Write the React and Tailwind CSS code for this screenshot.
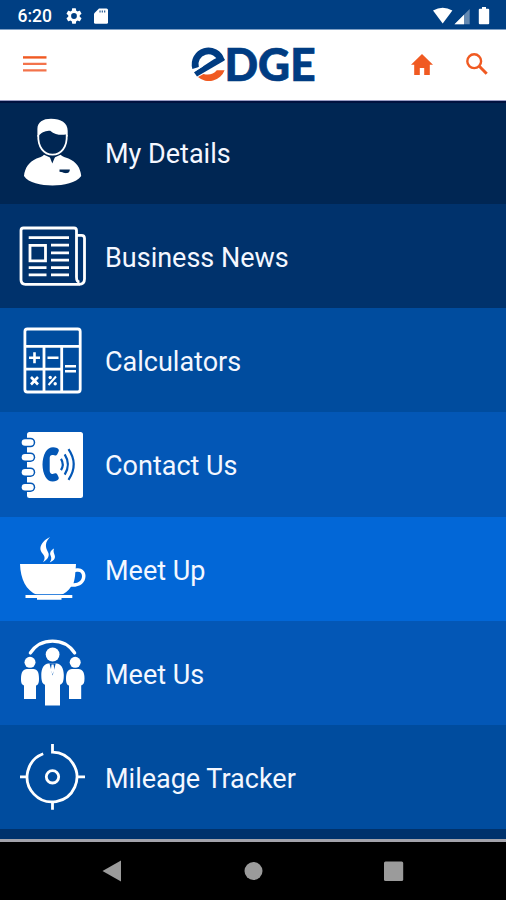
import React from "react";

function IconFrame({ children }) {
  return (
    <svg viewBox="0 0 105 104" className="h-[104px] w-[105px] shrink-0" fill="none" stroke="none">
      {children}
    </svg>
  );
}

function PersonIcon() {
  return (
    <IconFrame>
      <path d="M38.3 35C37.6 47 44 54.7 52.5 54.7S67.4 47 66.7 35" stroke="#fff" strokeWidth="1.8" />
      <path d="M37.4 37V29C37.4 22 43 18.8 51 18.8c10 0 16.7 4 16.7 12V37l-2-2.500c-5 .8-11 .2-15.500-3.800-4 .2-8 1-10.800 4.300z" fill="#fff" />
      <path d="M44 54.800 52.300 58.500l8.200-3.700c2 2 5 2.500 8 3.700 8 3.500 12 9.500 12.700 17.500C76 83 64 85.400 52.500 85.400S28.500 83 24 76c.7-8 5-14 12.500-17.500 3-1.200 6-1.700 7.500-3.700z" fill="#fff" />
      <path d="m49.800 57 2.500 6.500 2.700-6.500z" fill="#002653" />
      <path d="M59.500 69.500h10.300c0 3.500-2.500 3.800-5 3.600-2-.2-2.500-1.300-5.300-1.300z" fill="#002653" />
    </IconFrame>
  );
}

function NewsIcon() {
  return (
    <IconFrame>
      <g stroke="#fff" strokeWidth="2.800">
        <path d="M79.500 80.300H25.500q-4.500 0-4.500-4.500V26.500q0-2.500 2.500-2.500h50.500q2.500 0 2.500 2.500V73q0 5 3 5" />
        <path d="M77 31.300h4.500q3 0 3 3V75q0 5.300-5.500 5.300" />
        <path d="M28.700 33.700h40.300M51 41.200h18M51 48.800h18M51 56.200h18M28.700 63.700H46.500M51 63.700h18M28.700 70.800H46.500M51 70.800h18" />
        <path d="M30 41.300h15.500v15.500H30z" />
      </g>
    </IconFrame>
  );
}

function CalculatorIcon() {
  return (
    <IconFrame>
      <g stroke="#fff" strokeWidth="2.800">
        <rect x="24.900" y="21" width="55.300" height="63" rx="2.500" />
        <path d="M25 38.400h55M44 38.400V84M61.700 38.400V84M25 61.200h36.700" />
        <path d="M29 49.800h11M34.500 44.300v11M47.500 49.800h11M65 58.200h11M65 63.300h11M31 69l7 7.500M38 69l-7 7.500" strokeWidth="2.600" />
        <path d="m56 68.500-7.500 8.500" strokeWidth="2" />
      </g>
      <circle cx="50.200" cy="69.500" r="1.700" fill="#fff" />
      <circle cx="55.200" cy="75.800" r="1.700" fill="#fff" />
    </IconFrame>
  );
}

function ContactIcon() {
  return (
    <IconFrame>
      <rect x="27" y="19" width="56" height="66" rx="2.500" fill="#fff" />
      {[29.500, 44.200, 59.200, 74.200].map((y) => (
        <g key={y}>
          <rect x="20.700" y={y - 4.800} width="14.500" height="9.600" rx="4.800" fill="#0357b6" />
          <rect x="21.700" y={y - 3.300} width="12" height="6.600" rx="3.300" fill="#fff" />
        </g>
      ))}
      <path d="M57 35c-4.500-2-9-.5-11.500 4-4 7-4 18 0 25 2.700 4.500 7 5.700 11.500 3.500 1.500-.8 2.200-2 1.500-3.500l-1.200-2.500c-1-1.500-2.500-1.300-4-.7-2 .7-3.600-.8-3.600-3V45c0-2.400 1.400-3.500 3.500-3 1.700.6 3.200.8 4.100-.8l1.300-2.700c.7-1.500 0-2.700-1.600-3.500z" fill="#0357b6" />
      <path d="M61 45.800q3.500 5.700 0 11.400M64.700 41.400q6.400 10.100 0 20.200M68.500 36.200q10.500 15.300 0 30.600" stroke="#0357b6" strokeWidth="2.200" />
    </IconFrame>
  );
}

function CupIcon() {
  return (
    <IconFrame>
      <path d="M20 47h56l-.3 4.600c5-1.500 9.800 2 9.800 7.400 0 7-6 11.400-14.500 10.800-3 4.500-6.300 6.900-10.200 8.200h11.500v3H61.500v1.700H37V81H25.500v-3H37C26 73.500 20.500 62 20 47z" fill="#fff" />
      <path d="M75.300 55.300c3.800-1.400 6.700.2 6.700 3.700 0 4.500-3.500 7.300-8.500 7.200 1-3 1.700-7 1.800-10.900z" fill="#0267d7" />
      <path d="M25.500 77.500H72" stroke="#0267d7" strokeWidth=".8" />
      <path d="M50 20c-6 3-10.500 8-9.500 12.800.8 4 4.800 5 4 9-.3 1.500-1 2.500-1.500 3.500 4-2.500 6.500-5.300 5.500-9-1-3-3-4.800-2.500-9 .3-3 2-5 4-7.300zM54 31.500c-3.700 2.200-4.500 4.800-3.300 7.300 1 2.500.7 4.500-1 6.700 4-1.800 6-4 5-7.300-.8-2.500-1.700-3.700-.7-6.700z" fill="#fff" />
    </IconFrame>
  );
}

function PeopleIcon() {
  return (
    <IconFrame>
      <path d="M30.300 32A26.800 26.800 0 0 1 74.700 32" stroke="#fff" strokeWidth="3.200" strokeLinecap="round" />
      <g fill="#fff">
        <circle cx="30" cy="41.300" r="5.500" />
        <circle cx="75.200" cy="41.300" r="5.500" />
        <circle cx="52.600" cy="33.500" r="6.900" />
        <path d="M27 48h6.500c4 0 5.500 3.500 5.500 9.500 0 4.200-.5 6.200-3 7V78H24V64.500c-2.500-1-3-3-3-7C21 51.500 23 48 27 48z" />
        <path d="M72 48h6.500c4 0 6 3.500 6 9.500 0 4-.7 6-3.300 7V78H69V64.500c-2.300-.8-3-2.800-3-7C66 51.500 68 48 72 48z" />
        <path d="M48.500 42.500h8c4.500 0 7.300 5 7.300 11.500 0 5-.6 9-3.800 9.700V84.500H45V63.700c-3-.7-3.700-4.700-3.700-9.700C41.300 47.500 44 42.500 48.500 42.500z" />
      </g>
      <path d="m49.500 42.500 3.100 12 3.100-12z" fill="#0357b6" />
      <path d="M51.600 43.500h2l.8 6-1.800 3.700-1.800-3.700z" fill="#fff" />
    </IconFrame>
  );
}

function TrackerIcon() {
  return (
    <IconFrame>
      <g stroke="#fff" strokeWidth="2.800">
        <path d="M52.500 19v8.100A24.900 24.900 0 1 1 43.200 28.700M20 51.800h7.500M77.500 51.800h7.500M52.500 76.500v8.200" strokeLinejoin="miter" />
        <circle cx="52.500" cy="51.800" r="6.200" />
      </g>
    </IconFrame>
  );
}

function Logo() {
  return (
    <svg viewBox="0 -10 132 64" className="h-[64px] w-[132px]" role="img" aria-label="Edge">
      <path d="M5.600 25A13.300 13.300 0 0 1 31.200 17.500" stroke="#003c82" strokeWidth="6.700" fill="none" />
      <path d="M4 29.300 23.500 16.500l5-2.500 6.300 2-.3 1.600L7 33.400z" fill="#003c82" />
      <path d="M1 30 12.500 22.800" stroke="#fff" strokeWidth="1.400" />
      <path d="M8 34 13.500 30.900Q21.500 33.300 26.800 27.200H34.600A16.700 16.700 0 0 1 8 34z" fill="#f05a22" />
      <text x="34.500" y="37.800" fill="#003c82" stroke="#003c82" strokeWidth=".7" fontFamily="Lato, sans-serif" fontWeight="900" fontSize="44.800" textLength="91" lengthAdjust="spacingAndGlyphs">DGE</text>
    </svg>
  );
}

function StatusBar() {
  return (
    <div className="flex h-[30px] items-center border-b border-[#7f9fc4] bg-[#003f83] pl-[17.5px] pr-[15px] text-white">
      <span className="w-[48.500px] pt-[4px] text-[17.5px] font-medium leading-none">6:20</span>
      <svg viewBox="2 2 20 20" className="mt-[2px] h-[16px] w-[16px]" fill="currentColor">
        <path d="M19.140 12.940c.04-.3.060-.61.060-.94s-.02-.64-.07-.94l2.030-1.580a.49.49 0 0 0 .12-.61l-1.920-3.320a.488.488 0 0 0-.59-.22l-2.390.96c-.5-.38-1.030-.7-1.620-.94l-.36-2.540a.484.484 0 0 0-.48-.41h-3.840c-.24 0-.43.17-.47.41l-.36 2.540c-.59.24-1.130.57-1.620.94l-2.390-.96a.48.48 0 0 0-.59.22L2.740 8.870c-.12.21-.08.47.12.61l2.030 1.580c-.05.3-.09.63-.09.94s.02.64.07.94l-2.030 1.580a.49.49 0 0 0-.12.61l1.920 3.320c.12.22.37.29.59.22l2.390-.96c.5.38 1.030.7 1.620.94l.36 2.540c.05.24.24.41.48.41h3.840c.24 0 .44-.17.47-.41l.36-2.540c.59-.24 1.130-.56 1.620-.94l2.390.96c.22.08.47 0 .59-.22l1.920-3.320a.49.49 0 0 0-.12-.61zM12 15.600A3.600 3.600 0 1 1 12 8.400a3.600 3.600 0 0 1 0 7.200z" />
      </svg>
      <svg viewBox="0 0 14 16" className="ml-[12px] mt-[2px] h-[16px] w-[14px]" fill="#fff">
        <path d="M5 .5h7.500Q14 .5 14 2v12.500q0 1.300-1.500 1.300h-11Q0 15.800 0 14.500V5.500z" />
        <path d="M5.400 2.500h1.300v2H5.400zM7.700 2.500H9v2H7.700zM10 2.500h1.300v2H10z" fill="#39699b" />
      </svg>
      <svg viewBox="0 0 58 18" className="ml-auto mt-[2px] h-[18px] w-[58px]" fill="#fff">
        <path d="M0 3.500Q9.700-2 19.400 3.500L9.700 16.500z" />
        <path d="M36.700 2v15.300H21.500z" fill="#6489b2" />
        <path d="M31 7.700v9.600h-9.500z" />
        <path d="M49 1.800V0h4v1.800h2.200q1 0 1 1v13.500q0 1-1 1h-8.400q-1 0-1-1V2.800q0-1 1-1z" />
      </svg>
    </div>
  );
}

function Header() {
  return (
    <header className="flex h-[71px] items-center border-b border-[#9a9cc4] bg-white pb-[2px] pl-[23px] pr-[18px]">
      <button aria-label="Menu" className="flex w-[24px] flex-col">
        <svg viewBox="0 0 24 16" className="h-[16px] w-[24px]">
          <path d="M0 .2h23.500v2.400H0z" fill="#f05a22" />
          <path d="M0 6.700h23.500v2.400H0zM0 13.200h23.500v2.400H0z" fill="#f3734b" />
        </svg>
      </button>
      <div className="ml-[143px] mt-[2px]"><Logo /></div>
      <svg viewBox="0 0 22 21" className="ml-auto h-[21px] w-[22px]" fill="#f05a22">
        <path d="M11 0 22 10.800h-3.200V21h-5.600v-7H8.800v7H3.200V10.800H0z" />
      </svg>
      <svg viewBox="0 0 22 22" className="ml-[33px] h-[22px] w-[22px]" fill="none" stroke="#f05a22" strokeWidth="2.400">
        <circle cx="8.200" cy="8.200" r="6.900" />
        <path d="m13.300 13.300 7.400 7.500" strokeWidth="3" />
      </svg>
    </header>
  );
}

const items = [
  { label: "My Details", Icon: PersonIcon, row: "h-[104px] bg-[#002653]" },
  { label: "Business News", Icon: NewsIcon, row: "h-[104px] bg-[#00326c]" },
  { label: "Calculators", Icon: CalculatorIcon, row: "h-[104px] bg-[#004c9e]" },
  { label: "Contact Us", Icon: ContactIcon, row: "h-[105px] bg-[#0357b6]" },
  { label: "Meet Up", Icon: CupIcon, row: "h-[104px] bg-[#0267d7]" },
  { label: "Meet Us", Icon: PeopleIcon, row: "h-[104px] bg-[#0357b6]" },
  { label: "Mileage Tracker", Icon: TrackerIcon, row: "h-[104px] bg-[#004c9e]" },
];

export default function App() {
  return (
    <div className="flex h-[900px] w-[506px] flex-col overflow-hidden bg-black font-['Roboto',sans-serif]">
      <StatusBar />
      <Header />
      <nav className="flex h-[738px] flex-col overflow-hidden border-t-2 border-[#00113f] bg-[#00326c]">
        {items.map(({ label, Icon, row }, i) => (
          <div key={label} className={`flex shrink-0 items-center ${row} ${i === 0 ? "-mt-[3px] [clip-path:inset(3px_0_0_0)]" : ""}`}>
            <Icon />
            <span className="pt-[4px] text-[27px] leading-none text-[#f4f7ff]">{label}</span>
          </div>
        ))}
      </nav>
      <div className="h-[3px] bg-[#a3a3ab]" />
      <div className="flex flex-1 items-center bg-black">
        <svg viewBox="0 0 506 58" className="h-[58px] w-[506px]" fill="#9b9b9b">
          <path d="M102.500 29 121 18.500v21z" />
          <circle cx="253.500" cy="29" r="9" />
          <rect x="384" y="19.500" width="19.200" height="19.500" rx="1.500" />
        </svg>
      </div>
    </div>
  );
}
